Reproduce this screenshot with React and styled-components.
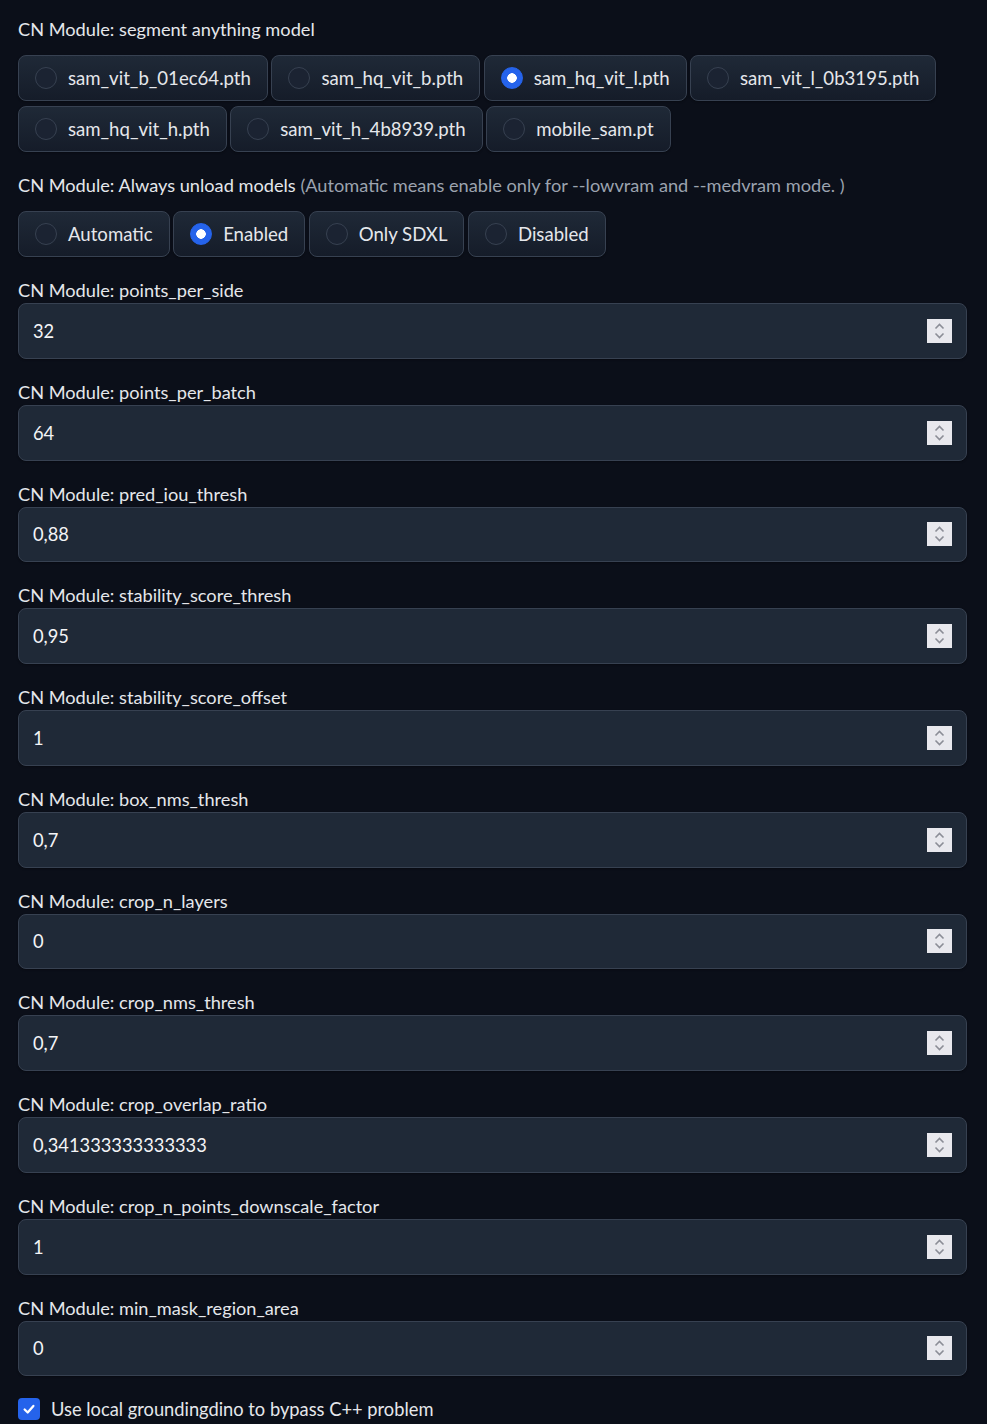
import React from "react";
import styled, { createGlobalStyle } from "styled-components";

const samModels = [
  "sam_vit_b_01ec64.pth",
  "sam_hq_vit_b.pth",
  "sam_hq_vit_l.pth",
  "sam_vit_l_0b3195.pth",
  "sam_hq_vit_h.pth",
  "sam_vit_h_4b8939.pth",
  "mobile_sam.pt",
];

const unloadOptions = ["Automatic", "Enabled", "Only SDXL", "Disabled"];

// number settings, in the order they appear
const numberFields = [
  ["points_per_side", "32"],
  ["points_per_batch", "64"],
  ["pred_iou_thresh", "0,88"],
  ["stability_score_thresh", "0,95"],
  ["stability_score_offset", "1"],
  ["box_nms_thresh", "0,7"],
  ["crop_n_layers", "0"],
  ["crop_nms_thresh", "0,7"],
  ["crop_overlap_ratio", "0,341333333333333"],
  ["crop_n_points_downscale_factor", "1"],
  ["min_mask_region_area", "0"],
];

const GlobalStyle = createGlobalStyle`
  body {
    margin: 0;
    background: #0b0f19;
    font-family: Lato, "Noto Sans", sans-serif;
    color: #e5e7eb;
  }
`;

const Spinner = () => (
  <SpinBox>
    <svg width="25" height="24" viewBox="0 0 25 24">
      <path d="M8.5 9.5 L12.5 5.5 L16.5 9.5" fill="none" stroke="#8b8d96" strokeWidth="1.6" />
      <path d="M8.5 14.5 L12.5 18.5 L16.5 14.5" fill="none" stroke="#8b8d96" strokeWidth="1.6" />
    </svg>
  </SpinBox>
);

const RadioGroup = ({ label, info, options, selected }) => (
  <Block>
    <Label $radio>
      {label}
      {info && <Info> {info}</Info>}
    </Label>
    <Options>
      {options.map((opt) => (
        <OptionButton key={opt}>
          <RadioDot $checked={opt === selected} />
          <span>{opt}</span>
        </OptionButton>
      ))}
    </Options>
  </Block>
);

const App = () => {
  return (
    <>
      <GlobalStyle />
      <Page>
        <RadioGroup
          label="CN Module: segment anything model"
          options={samModels}
          selected="sam_hq_vit_l.pth"
        />
        <RadioGroup
          label="CN Module: Always unload models"
          info="(Automatic means enable only for --lowvram and --medvram mode. )"
          options={unloadOptions}
          selected="Enabled"
        />
        {numberFields.map(([name, value]) => (
          <Block key={name}>
            <Label>CN Module: {name}</Label>
            <NumberField>
              <span>{value}</span>
              <Spinner />
            </NumberField>
          </Block>
        ))}
        <CheckRow>
          <CheckBox>
            <svg width="14" height="14" viewBox="0 0 16 16">
              <path d="M3 8.5 L6.5 12 L13 4.5" fill="none" stroke="#fff" strokeWidth="2.6" strokeLinecap="round" strokeLinejoin="round" />
            </svg>
          </CheckBox>
          <span>Use local groundingdino to bypass C++ problem</span>
        </CheckRow>
      </Page>
    </>
  );
};

const Page = styled.div`
  display: flex;
  flex-direction: column;
  gap: 21px;
  padding: 17px 20px 20px 18px;
`;
const Block = styled.div`
  display: flex;
  flex-direction: column;
`;
const Label = styled.div`
  font-size: 18.2px;
  line-height: 24px;
  height: 24px;
  color: #e5e7eb;
  margin-bottom: ${(p) => (p.$radio ? "14px" : "1px")};
  white-space: nowrap;
`;
const Info = styled.span`
  color: #9ca3af;
`;
const Options = styled.div`
  display: flex;
  flex-wrap: wrap;
  gap: 5px 3.5px;
  max-width: 950px;
`;
const OptionButton = styled.div`
  display: flex;
  align-items: center;
  gap: 11px;
  height: 46px;
  box-sizing: border-box;
  padding: 0 16px;
  border: 1px solid #374151;
  border-radius: 8px;
  background: linear-gradient(to top, #151c29, #1f2937);
  box-shadow: 0 1px 2px rgba(0, 0, 0, 0.3);
  font-size: 18.6px;
  color: #e5e7eb;
  white-space: nowrap;
`;
const RadioDot = styled.span`
  width: 22px;
  height: 22px;
  box-sizing: border-box;
  border-radius: 50%;
  border: 1px solid ${(p) => (p.$checked ? "#2563eb" : "#374151")};
  background: ${(p) =>
    p.$checked
      ? "radial-gradient(circle, #fff 0 4.5px, #2563eb 5px)"
      : "#1b2332"};
  flex-shrink: 0;
`;
const NumberField = styled.div`
  display: flex;
  align-items: center;
  justify-content: space-between;
  height: 55.75px;
  box-sizing: border-box;
  padding: 0 14px 0 14px;
  border: 1px solid #374151;
  border-radius: 8px;
  background: #1f2937;
  box-shadow: 0 1px 2px rgba(0, 0, 0, 0.3);
  font-size: 18.3px;
  color: #f3f4f6;
`;
const SpinBox = styled.span`
  display: flex;
  width: 25px;
  height: 24px;
  background: #e8e8ed;
`;
const CheckRow = styled.label`
  display: flex;
  align-items: center;
  gap: 11px;
  font-size: 18.3px;
  line-height: 24px;
  color: #e5e7eb;
`;
const CheckBox = styled.span`
  display: flex;
  align-items: center;
  justify-content: center;
  width: 22px;
  height: 22px;
  border-radius: 4px;
  background: #2563eb;
`;

export default App;
